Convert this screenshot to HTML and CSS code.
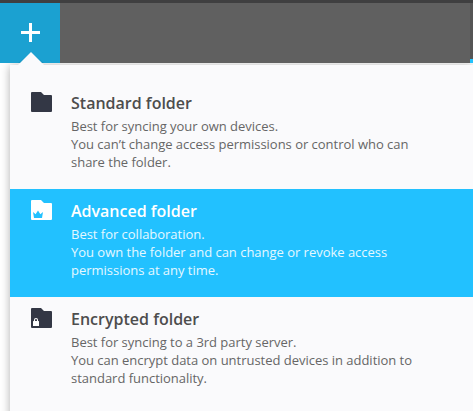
FILE: index.html
```html
<!DOCTYPE html>
<html lang="en">
<head>
<meta charset="utf-8">
<title>Add folder</title>
<link rel="stylesheet" href="styles.css">
</head>
<body>
<header class="toolbar">
  <button class="add" aria-label="Add folder">
    <svg width="19" height="19" viewBox="0 0 19 19"><path d="M9.5 0v19M0 9.5h19" stroke="currentColor" stroke-width="3"/></svg>
  </button>
  <div class="edge"></div>
</header>
<main class="menu">
  <svg class="arrow" width="26" height="13" viewBox="0 0 26 13"><path d="M0 13 13 0l13 13z" fill="currentColor"/></svg>
  <section class="option">
    <svg class="icon" width="21" height="20" viewBox="0 0 21 20"><path d="M1 0h9l3 3h7q1 0 1 1v15q0 1-1 1H1q-1 0-1-1V1q0-1 1-1z" fill="currentColor"/></svg>
    <div>
      <h2>Standard folder</h2>
      <p>Best for syncing your own devices.<br>You can’t change access permissions or control who can<br>share the folder.</p>
    </div>
  </section>
  <section class="option selected">
    <svg class="icon" width="21" height="20" viewBox="0 0 21 20"><path d="M1 0h9l3 3h7q1 0 1 1v15q0 1-1 1H1q-1 0-1-1V1q0-1 1-1z" fill="currentColor"/><path class="badge" d="M2 12l2.6 2.3L7 10.5l2.4 3.8L12 12l-1 6H3z"/></svg>
    <div>
      <h2>Advanced folder</h2>
      <p>Best for collaboration.<br>You own the folder and can change or revoke access<br>permissions at any time.</p>
    </div>
  </section>
  <section class="option">
    <svg class="icon" width="21" height="20" viewBox="0 0 21 20"><path d="M1 0h9l3 3h7q1 0 1 1v15q0 1-1 1H1q-1 0-1-1V1q0-1 1-1z" fill="currentColor"/><rect x="2" y="13" width="6" height="5" rx=".5" fill="#fff"/><path d="M3.5 13v-1a1.5 1.5 0 0 1 3 0v1" fill="none" stroke="#fff" stroke-width="1.1"/></svg>
    <div>
      <h2>Encrypted folder</h2>
      <p>Best for syncing to a 3rd party server.<br>You can encrypt data on untrusted devices in addition to<br>standard functionality.</p>
    </div>
  </section>
</main>
</body>
</html>
```
FILE: styles.css
```css
* { box-sizing: border-box; }
body {
  margin: 0;
  height: 411px;
  overflow: hidden;
  background: #fff;
  font-family: "Open Sans", "Noto Sans", sans-serif;
}
.toolbar {
  display: flex;
  justify-content: space-between;
  height: 63px;
  border-top: 3px solid #3f3f40;
  background: #606060;
}
.add {
  display: flex;
  justify-content: center;
  width: 60px;
  height: 60px;
  padding: 20px 0 0 1px;
  border: 0;
  background: #1ba1d1;
  color: #fff;
}
.edge {
  width: 3px;
  border-bottom: 4px solid #22c1fc;
  background: #555;
}
.menu {
  position: relative;
  height: 360px;
  margin: 2px 0 0 10px;
  padding-top: 16px;
  background: #fafafc;
  box-shadow: 0 1px 9px rgba(0, 0, 0, .32);
  clip-path: polygon(-10px -2px, 8px -2px, 21px -14px, 34px -2px, 100% -2px, 100% 100%, -10px 100%);
}
.arrow {
  position: absolute;
  top: -13px;
  left: 8px;
  color: #fafafc;
}
.option {
  display: flex;
  gap: 19px;
  height: 108px;
  padding: 11px 0 0 21px;
  color: #666;
}
.icon {
  flex: none;
  color: #333745;
}
h2 {
  margin: 0 0 3px;
  font-size: 16px;
  line-height: 22px;
  font-weight: 600;
  color: #4d4d4d;
}
p {
  margin: 0;
  font-size: 13px;
  line-height: 18px;
  letter-spacing: -.02px;
  white-space: nowrap;
}
.selected {
  background: #22c1ff;
  color: #e5f8ff;
}
.selected h2, .selected .icon { color: #fff; }
.badge { fill: #22c1ff; }
```
